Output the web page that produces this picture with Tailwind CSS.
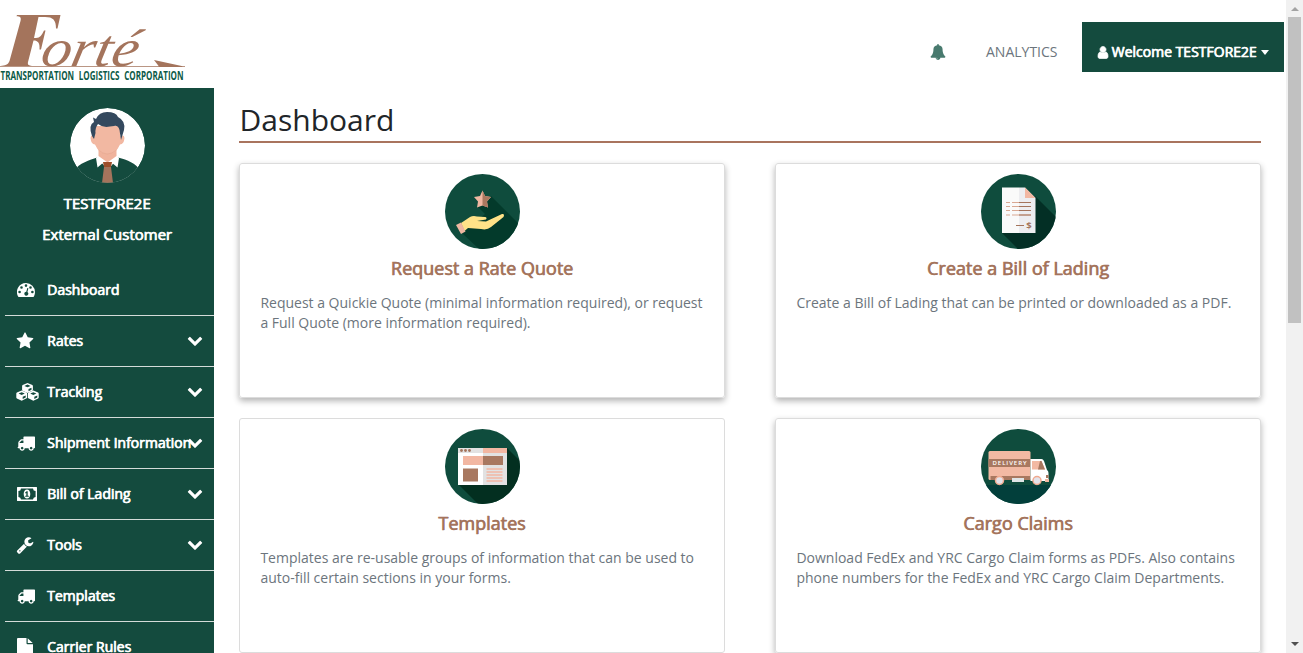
<!DOCTYPE html>
<html lang="en">
<head>
<meta charset="utf-8">
<title>Dashboard</title>
<script src="https://cdn.jsdelivr.net/npm/@tailwindcss/browser@4"></script>
</head>
<body class="h-[653px] w-[1303px] overflow-hidden bg-white font-['Open_Sans',sans-serif] text-sm text-[#6c757d]">
<svg class="hidden">
  <symbol id="star" viewBox="0 0 1792 1792"><path d="M1728 647q0 22-26 48l-363 354 86 500q1 7 1 20 0 21-10.500 35.500t-30.500 14.500q-19 0-40-12l-449-236-449 236q-22 12-40 12-21 0-31.500-14.500t-10.500-35.500q0-6 2-20l86-500-364-354q-25-27-25-48 0-37 56-46l502-73 225-455q19-41 49-41t49 41l225 455 502 73q56 9 56 46z"/></symbol>
  <symbol id="bell" viewBox="0 0 1792 1792"><path d="M912 1696q0-16-16-16-59 0-101.500-42.500t-42.500-101.500q0-16-16-16t-16 16q0 73 51.500 124.500t124.500 51.500q16 0 16-16zm816-288q0 52-38 90t-90 38h-448q0 106-75 181t-181 75-181-75-75-181h-448q-52 0-90-38t-38-90q50-42 91-88t85-119.500 74.500-158.500 50-206 19.500-260q0-152 117-282.500t307-158.500q-8-19-8-39 0-40 28-68t68-28 68 28 28 68q0 20-8 39 190 28 307 158.500t117 282.500q0 139 19.500 260t50 206 74.500 158.500 85 119.500 91 88z"/></symbol>
  <symbol id="user" viewBox="0 0 1792 1792"><path d="M1536 1399q0 109-62.500 187t-150.500 78h-854q-88 0-150.500-78t-62.500-187q0-85 8.500-160.500t31.500-152 58.500-131 94-89 134.500-34.500q131 128 313 128t313-128q76 0 134.500 34.500t94 89 58.500 131 31.500 152 8.500 160.500zm-256-887q0 159-112.500 271.500t-271.500 112.500-271.500-112.500-112.500-271.500 112.500-271.500 271.500-112.500 271.500 112.500 112.500 271.500z"/></symbol>
  <symbol id="truck" viewBox="0 0 1792 1792"><path d="M640 1408q0-52-38-90t-90-38-90 38-38 90 38 90 90 38 90-38 38-90zm-384-512h384v-256h-158q-13 0-22 9l-195 195q-9 9-9 22v30zm1280 512q0-52-38-90t-90-38-90 38-38 90 38 90 90 38 90-38 38-90zm256-1088v1024q0 15-4 26.500t-13.500 18.500-16.500 11.500-23.500 6-22.500 2-25.500 0-22.500-.5q0 106-75 181t-181 75-181-75-75-181h-384q0 106-75 181t-181 75-181-75-75-181h-64q-3 0-22.500.5t-25.500 0-22.500-2-23.500-6-16.500-11.500-13.500-18.500-4-26.500q0-26 19-45t45-19v-320q0-8-.5-35t0-38 2.500-34.500 6.500-37 14-30.500 22.500-30l198-198q19-19 50.500-32t58.500-13h160v-192q0-26 19-45t45-19h1024q26 0 45 19t19 45z"/></symbol>
  <symbol id="wrench" viewBox="0 0 1792 1792"><path d="M448 1472q0-26-19-45t-45-19-45 19-19 45 19 45 45 19 45-19 19-45zm644-420l-682 682q-37 37-90 37-52 0-91-37l-106-108q-38-36-38-90 0-53 38-91l681-681q39 98 114.500 173.500t173.500 114.500zm634-435q0 39-23 106-47 134-164.500 217.500t-258.500 83.500q-185 0-316.500-131.500t-131.500-316.500 131.500-316.500 316.500-131.500q58 0 121.500 16.500t107.500 46.500q16 11 16 28t-16 28l-293 169v224l193 107q5-3 79-48.500t135.500-81 70.500-35.500q15 0 23.500 10t8.500 25z"/></symbol>
  <symbol id="chev" viewBox="0 0 1792 1792"><path d="M1683 808l-742 741q-19 19-45 19t-45-19l-742-741q-19-19-19-45.500t19-45.500l166-165q19-19 45-19t45 19l531 531 531-531q19-19 45-19t45 19l166 165q19 19 19 45.500t-19 45.500z"/></symbol>
  <symbol id="gauge" viewBox="0 0 18 18"><path fill-rule="evenodd" d="M9 2a9 9 0 0 1 9 9c0 1.800-.5 3.400-1.300 4.700q-.2.300-.6.300H1.900q-.4 0-.6-.3A9 9 0 0 1 9 2zM2.600 9.700a1.300 1.300 0 1 0 0 2.600 1.300 1.300 0 0 0 0-2.600zM4.500 5.200a1.300 1.300 0 1 0 0 2.600 1.300 1.300 0 0 0 0-2.600zM9 3.300a1.300 1.300 0 1 0 0 2.600 1.300 1.300 0 0 0 0-2.600zM13.500 5.200a1.300 1.300 0 1 0 0 2.600 1.300 1.300 0 0 0 0-2.600zM15.400 9.700a1.300 1.300 0 1 0 0 2.600 1.300 1.300 0 0 0 0-2.600zM10.300 6.900 9.300 10.700a2 2 0 1 0 1.100.3l1-3.800z"/></symbol>
  <symbol id="cubes" viewBox="0 0 23 18"><path fill-rule="evenodd" d="M11.500 0 16.300 2q.6.300.6 1v4.400l-5.400 2.700-5.400-2.700V3q0-.7.600-1zM11.500 1.600 8.400 3l3.100 1.300L14.600 3zM12.500 6v2.300L15.500 6.800V4.800z"/><path fill-rule="evenodd" d="M5.700 7.600 10.500 9.600q.6.300.6 1V15l-5.400 2.700L.9 15.400Q.3 15 .3 14.400v-3.800q0-.7.6-1zM5.700 9.200l-3.100 1.400 3.100 1.300 3.100-1.300zM6.700 13.700v2.200l3-1.500v-2zM17.300 7.600l4.800 2q.6.300.6 1v3.800q0 .6-.6 1l-4.800 2.300L11.900 15v-4.400q0-.7.6-1zM17.300 9.200l-3.100 1.400 3.100 1.300 3.100-1.300zM18.300 13.700v2.200l3-1.500v-2z"/></symbol>
  <symbol id="money" viewBox="0 0 20 14"><path fill-rule="evenodd" d="M.6 0h18.800q.6 0 .6.600v12.800q0 .6-.6.600H.6q-.6 0-.6-.6V.6Q0 0 .6 0zM4 1.400A2.700 2.700 0 0 1 1.400 4v6A2.700 2.700 0 0 1 4 12.600h12A2.700 2.700 0 0 1 18.600 10V4A2.700 2.700 0 0 1 16 1.400zM10 2.400c2 0 3.300 2 3.300 4.600s-1.300 4.600-3.300 4.600S6.700 9.600 6.700 7 8 2.400 10 2.400zM9.600 4.300 8 5.700l.7.800.6-.5v2.700H8.200v1h3.600v-1h-1.100V4.300z"/></symbol>
  <symbol id="file" viewBox="0 0 16 18"><path d="M0 1q0-1 1-1h8.500v5.200q0 1 1 1H16V17q0 1-1 1H1q-1 0-1-1zM10.700.2 15.700 5h-5z"/></symbol>
</svg>
<div class="flex h-full">
  <div class="flex w-[1286px] flex-col">
    <header class="flex h-[88px] shrink-0 justify-between pr-[2px]">
      <svg class="h-[88px] w-[190px]" viewBox="0 0 190 88">
        <g fill="#a4745c" font-family="Liberation Serif, serif" font-style="italic">
          <path d="M17 15H60.500L57.500 28.500H56C56 20 53 17 45 17H38.500L34 38H36C40 38 42 35 44 30.500H45.500L41 49.500H39.500C40 43 38 40.500 33.500 40.500L28 62C27.300 65 29 65.500 32 66H0.500C5 65.500 8 65 9.500 61L20.500 21C21.500 17 20 16.300 16.500 16.200Z"/>
          <text transform="translate(39 66) skewX(-12)" font-size="53" textLength="97" lengthAdjust="spacingAndGlyphs">orté</text>
          <path d="M0 66.200H185V67H0ZM154 60 184 66.500H159Z"/>
        </g>
        <text x="0.500" y="79.500" font-family="Open Sans, sans-serif" font-weight="700" font-size="12.500" fill="#0c5a47" word-spacing="4" textLength="183" lengthAdjust="spacingAndGlyphs">TRANSPORTATION LOGISTICS CORPORATION</text>
      </svg>
      <nav class="mt-[22px] flex h-[50px] items-center">
        <svg class="mt-2.5 mr-10 size-4 fill-[#487a6e]"><use href="#bell"/></svg>
        <span class="mt-2.5 mr-[24.500px] text-[#6c757d]">ANALYTICS</span>
        <div class="flex h-[50px] w-[202px] items-center bg-[#144b3e] pt-2.5 pl-3.5 text-white">
          <svg class="h-[15px] w-3.5 fill-white stroke-white stroke-[90]"><use href="#user"/></svg>
          <span class="ml-[1.500px] whitespace-nowrap [-webkit-text-stroke:0.4px] [text-shadow:0.5px_0_0_#fff]">Welcome TESTFORE2E</span>
          <i class="ml-1 border-x-[4.500px] border-t-[5px] border-x-transparent border-t-white"></i>
        </div>
      </nav>
    </header>
    <div class="flex min-h-0 flex-1">
      <aside class="w-[214px] shrink-0 overflow-hidden bg-[#144b3e] text-[15px] text-white [-webkit-text-stroke:0.4px] [text-shadow:0.5px_0_0_#fff]">
        <div class="flex h-[177px] flex-col items-center pt-5">
          <svg class="size-[75px] shrink-0 rounded-full" viewBox="0 0 75 75">
            <circle cx="37.500" cy="37.500" r="37.500" fill="#fff"/>
            <path d="M4 63C9 55 20 52 27 49.500L38 62 48 49.500C58 52 65 55 71 63L60 76H14Z" fill="#144b3e"/>
            <path d="M28 48 37.500 56 47 48 49 50 47.500 59.500 41 54H34L27.500 59.500 26 50Z" fill="#fff"/>
            <path d="M28.500 40H46.500V48L37.500 54.500 28.500 48Z" fill="#f0b39c"/>
            <path d="M25 18H50V28.500Q54 26 54.500 30 54 36 50 36.500 46 46 37.500 46T25 36.500Q21 36 20.500 30 21 26 25 28.500Z" fill="#f2b8a2"/>
            <path d="M28.500 42Q37 50 46.500 42" fill="none" stroke="#e0a48d" stroke-width=".5"/>
            <path d="M22 28Q18 17 24 14L23 9.500 26 11Q29 4 37 4 46 4 48 9 56 13 54 22L51 32 49.500 22Q48 17 44 18L40 18.500Q33 20 28 16 25 20 25.500 25L24 31Z" fill="#34495e"/>
            <path d="M33 54H42L41 59H34Z" fill="#9c4f2b"/><path d="M34 59H41L43 75H32Z" fill="#a4745c"/>
            <path d="M7.500 60A37.300 37.300 0 0 0 67.500 60" fill="none" stroke="#5c8479" stroke-width=".5"/>
          </svg>
          <div class="mt-[9px] leading-[23px]">TESTFORE2E</div>
          <div class="mt-2 leading-[23px]">External Customer</div>
        </div>
        <ul class="pl-[5px] text-sm [&_svg]:fill-white [&_span]:w-[139.500px] [&_span]:whitespace-nowrap [&>li]:flex [&>li]:h-[51px] [&>li]:items-center [&>li]:border-b [&>li]:border-[#d4dcd9] [&>li]:pl-3 [&_span+svg]:mb-[2px] [&_span+svg]:size-4">
          <li><div class="w-[30px]"><svg class="size-[18px]"><use href="#gauge"/></svg></div><span>Dashboard</span></li>
          <li><div class="w-[30px]"><svg class="-ml-[0.600px] size-[18px]"><use href="#star"/></svg></div><span>Rates</span><svg><use href="#chev"/></svg></li>
          <li><div class="w-[30px]"><svg class="-ml-[0.600px] h-[18px] w-[23px]"><use href="#cubes"/></svg></div><span>Tracking</span><svg><use href="#chev"/></svg></li>
          <li><div class="w-[30px]"><svg class="size-[18px]"><use href="#truck"/></svg></div><span>Shipment Information</span><svg><use href="#chev"/></svg></li>
          <li><div class="w-[30px]"><svg class="h-[14px] w-5"><use href="#money"/></svg></div><span>Bill of Lading</span><svg><use href="#chev"/></svg></li>
          <li><div class="w-[30px]"><svg class="-ml-[0.600px] size-[18px]"><use href="#wrench"/></svg></div><span>Tools</span><svg><use href="#chev"/></svg></li>
          <li><div class="w-[30px]"><svg class="size-[18px]"><use href="#truck"/></svg></div><span>Templates</span></li>
          <li><div class="w-[30px]"><svg class="h-[18px] w-4"><use href="#file"/></svg></div><span>Carrier Rules</span></li>
        </ul>
      </aside>
      <main class="flex-1 overflow-hidden px-[25px] pt-[10px]">
        <h1 class="h-[45px] border-b-2 border-[#a9745e] pl-[0.500px] text-[30px] leading-[44px] text-[#212529]">Dashboard</h1>
        <div class="mt-5 grid grid-cols-2 gap-x-[50px] gap-y-5 [&_h2]:mt-1.5 [&_h2]:text-lg [&_h2]:leading-[26px] [&_h2]:text-[#a4745c] [&_h2]:[-webkit-text-stroke:0.4px] [&_h2]:[text-shadow:0.5px_0_0_#a4745c] [&_p]:mt-3 [&_p]:w-full [&_p]:leading-5 [&_section]:flex [&_section]:h-[235px] [&_section]:flex-col [&_section]:items-center [&_section]:rounded-[3px] [&_section]:border [&_section]:border-[#dcdcdc] [&_section]:px-[20.400px] [&_section]:pt-2.5 [&_section>svg]:size-[75px] [&_section>svg]:shrink-0 [&_section>svg]:rounded-full">
          <section class="shadow-[0_3px_6px_rgba(0,0,0,0.3)]">
            <svg viewBox="0 0 75 75"><path fill="#0f4c3d" d="M0 0H75V75H0Z"/><path fill="#033a2b" d="M46 22 75 51V75H34L17 59 40 40 32 32Z"/>
              <path fill="#f0b7a2" d="M37.500 16.500 40 22 46 23 42 27.500 43 33.500 37.500 31.500 32 33.500 33 27.500 29 23 35 22Z"/><path fill="#ab7860" d="M37.500 16.500 40 22 46 23 42 27.500 43 33.500 37.500 31.500Z"/>
              <path fill="#ffe288" d="M16 49 25 43Q28 41.500 32 42.500L40 43Q42.500 43.500 41 45.500L32 47 41 47.500 57 40Q60 39.500 58.500 43L46 53Q42 56.500 36 55L23 54 19.500 57Z"/><path fill="#f0b7a2" d="M11 51 16 48.500 20.500 57.500 16 60Z"/></svg>
            <h2>Request a Rate Quote</h2>
            <p>Request a Quickie Quote (minimal information required), or request a Full Quote (more information required).</p>
          </section>
          <section class="shadow-[0_3px_6px_rgba(0,0,0,0.3)]">
            <svg viewBox="0 0 75 75"><path fill="#0f4c3d" d="M0 0H75V75H0Z"/><path fill="#032f25" d="M54 22 75 43V75H37L21 59Z"/>
              <path fill="#fafafa" d="M21 13.500H38V59H21Z"/><path fill="#ededf0" d="M38 13.500H44L54.500 24V59H38Z"/><path fill="#f2b7a2" d="M44 13.500 54.500 24H44Z"/>
              <path stroke="#d9a893" d="M25 28.500h4m2 0h19M25 32.500h4m2 0h19M25 36.500h4m2 0h19M25 41h4m2 0h19"/><path stroke="#a4745c" d="M38 28.500H50M38 32.500H50M38 36.500H50M38 41H50M35 51.500H43"/>
              <text x="48" y="54.500" text-anchor="middle" font-size="9.500" font-weight="700" fill="#a4745c">$</text></svg>
            <h2>Create a Bill of Lading</h2>
            <p>Create a Bill of Lading that can be printed or downloaded as a PDF.</p>
          </section>
          <section>
            <svg viewBox="0 0 75 75"><path fill="#0f4c3d" d="M0 0H75V75H0Z"/><path fill="#032f20" d="M62 19 75 32V75H33L13 55Z"/>
              <path fill="#fff" d="M13 19H38V56H13Z"/><path fill="#e2e2e2" d="M38 19H62V56H38ZM13 19H38V24H13Z"/><path fill="#f2b7a2" d="M38 19H62V24H38ZM18 27H38V36H18Z"/><path fill="#a87860" d="M38 27H58V36H38ZM18 39.500H33V52.500H18Z"/>
              <path fill="none" stroke="#f2b7a2" stroke-width="1.500" d="M41.500 40H57.500M41.500 43H57.500M41.500 46H57.500M41.500 49H57.500M41.500 52H57.500"/><g fill="#a4745c"><circle cx="16.500" cy="21.500" r="1.400"/><circle cx="20.500" cy="21.500" r="1.400"/><circle cx="24.500" cy="21.500" r="1.400"/></g></svg>
            <h2>Templates</h2>
            <p>Templates are re-usable groups of information that can be used to auto-fill certain sections in your forms.</p>
          </section>
          <section class="shadow-[0_3px_6px_rgba(0,0,0,0.3)]">
            <svg viewBox="0 0 75 75"><path fill="#0f4c3d" d="M0 0H75V75H0Z"/><path fill="#023f3b" d="M0 56H75V75H0Z"/>
              <rect x="7.500" y="22" width="42" height="29" rx="1.500" fill="#f2b9a3"/><path fill="#a87860" d="M7.500 30H49.500V38H7.500ZM9.500 47H49.500V51H9.500Z"/>
              <text x="11.500" y="36" font-size="6" font-weight="600" fill="#fff" textLength="34">DELIVERY</text>
              <path fill="#fff" d="M49.500 30H60.500Q62 30 63 32L66 41Q67.500 42 67.500 44V52H49.500Z"/><path fill="#f2b9a3" d="M51 32H60.500L64 40.500H51Z"/><path fill="#a87860" d="M59 32H60.500L64 40.500H57ZM65 46H67.500V49H65Z"/><path fill="#f2b9a3" d="M64 50H68V53H64Z"/>
              <rect x="31" y="49" width="12" height="4" fill="#dfe5e6"/><g fill="#e3e3ea" stroke="#f0a98e" stroke-width="1.500"><circle cx="18.500" cy="51.500" r="4"/><circle cx="56" cy="51.500" r="4"/></g></svg>
            <h2>Cargo Claims</h2>
            <p>Download FedEx and YRC Cargo Claim forms as PDFs. Also contains phone numbers for the FedEx and YRC Cargo Claim Departments.</p>
          </section>
        </div>
      </main>
    </div>
  </div>
  <div class="flex w-[17px] flex-col items-center bg-[#f1f1f1]">
    <i class="mt-[7px] border-x-4 border-b-4 border-x-transparent border-b-[#a3a3a3]"></i>
    <div class="mt-1.5 h-[306px] w-[13px] bg-[#c1c1c1]"></div>
    <i class="mt-auto mb-[7px] border-x-4 border-t-4 border-x-transparent border-t-[#505050]"></i>
  </div>
</div>
</body>
</html>
